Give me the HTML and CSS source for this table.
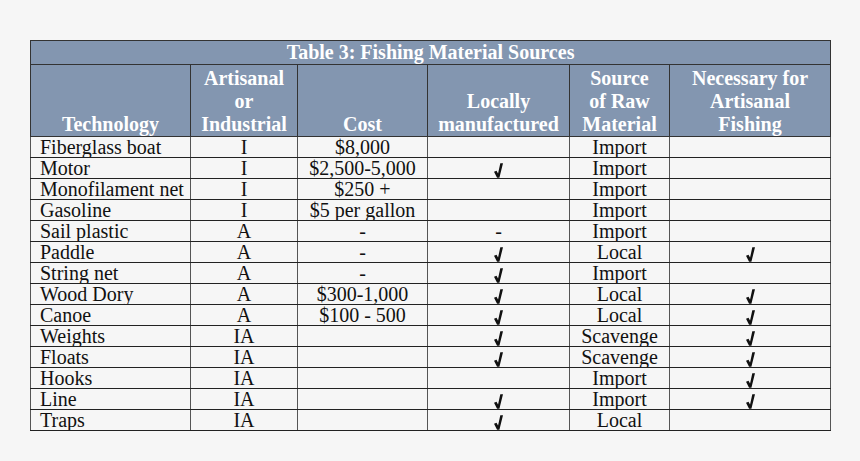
FILE: index.html
```html
<!DOCTYPE html>
<html>
<head>
<meta charset="utf-8">
<link rel="stylesheet" href="styles.css">
</head>
<body>
<table class="tbl">
  <colgroup>
    <col class="c1"><col class="c2"><col class="c3"><col class="c4"><col class="c5"><col class="c6">
  </colgroup>
  <thead>
    <tr class="title-row"><th colspan="6">Table 3: Fishing Material Sources</th></tr>
    <tr class="head-row">
      <th>Technology</th>
      <th>Artisanal<br>or<br>Industrial</th>
      <th>Cost</th>
      <th>Locally<br>manufactured</th>
      <th>Source<br>of Raw<br>Material</th>
      <th>Necessary for<br>Artisanal<br>Fishing</th>
    </tr>
  </thead>
  <tbody>
    <tr><td class="name">Fiberglass boat</td><td>I</td><td>$8,000</td><td></td><td>Import</td><td></td></tr>
    <tr><td class="name">Motor</td><td>I</td><td>$2,500-5,000</td><td><svg class="chk" viewBox="0 0 10 16"><path d="M0 9.4 L2.8 8.2 L4.5 11.4 L7 0 L10 0 L6 16 L3.4 16 Z"/></svg></td><td>Import</td><td></td></tr>
    <tr><td class="name">Monofilament net</td><td>I</td><td>$250 +</td><td></td><td>Import</td><td></td></tr>
    <tr><td class="name">Gasoline</td><td>I</td><td>$5 per gallon</td><td></td><td>Import</td><td></td></tr>
    <tr><td class="name">Sail plastic</td><td>A</td><td>-</td><td>-</td><td>Import</td><td></td></tr>
    <tr><td class="name">Paddle</td><td>A</td><td>-</td><td><svg class="chk" viewBox="0 0 10 16"><path d="M0 9.4 L2.8 8.2 L4.5 11.4 L7 0 L10 0 L6 16 L3.4 16 Z"/></svg></td><td>Local</td><td><svg class="chk" viewBox="0 0 10 16"><path d="M0 9.4 L2.8 8.2 L4.5 11.4 L7 0 L10 0 L6 16 L3.4 16 Z"/></svg></td></tr>
    <tr><td class="name">String net</td><td>A</td><td>-</td><td><svg class="chk" viewBox="0 0 10 16"><path d="M0 9.4 L2.8 8.2 L4.5 11.4 L7 0 L10 0 L6 16 L3.4 16 Z"/></svg></td><td>Import</td><td></td></tr>
    <tr><td class="name">Wood Dory</td><td>A</td><td>$300-1,000</td><td><svg class="chk" viewBox="0 0 10 16"><path d="M0 9.4 L2.8 8.2 L4.5 11.4 L7 0 L10 0 L6 16 L3.4 16 Z"/></svg></td><td>Local</td><td><svg class="chk" viewBox="0 0 10 16"><path d="M0 9.4 L2.8 8.2 L4.5 11.4 L7 0 L10 0 L6 16 L3.4 16 Z"/></svg></td></tr>
    <tr><td class="name">Canoe</td><td>A</td><td>$100 - 500</td><td><svg class="chk" viewBox="0 0 10 16"><path d="M0 9.4 L2.8 8.2 L4.5 11.4 L7 0 L10 0 L6 16 L3.4 16 Z"/></svg></td><td>Local</td><td><svg class="chk" viewBox="0 0 10 16"><path d="M0 9.4 L2.8 8.2 L4.5 11.4 L7 0 L10 0 L6 16 L3.4 16 Z"/></svg></td></tr>
    <tr><td class="name">Weights</td><td>IA</td><td></td><td><svg class="chk" viewBox="0 0 10 16"><path d="M0 9.4 L2.8 8.2 L4.5 11.4 L7 0 L10 0 L6 16 L3.4 16 Z"/></svg></td><td>Scavenge</td><td><svg class="chk" viewBox="0 0 10 16"><path d="M0 9.4 L2.8 8.2 L4.5 11.4 L7 0 L10 0 L6 16 L3.4 16 Z"/></svg></td></tr>
    <tr><td class="name">Floats</td><td>IA</td><td></td><td><svg class="chk" viewBox="0 0 10 16"><path d="M0 9.4 L2.8 8.2 L4.5 11.4 L7 0 L10 0 L6 16 L3.4 16 Z"/></svg></td><td>Scavenge</td><td><svg class="chk" viewBox="0 0 10 16"><path d="M0 9.4 L2.8 8.2 L4.5 11.4 L7 0 L10 0 L6 16 L3.4 16 Z"/></svg></td></tr>
    <tr><td class="name">Hooks</td><td>IA</td><td></td><td></td><td>Import</td><td><svg class="chk" viewBox="0 0 10 16"><path d="M0 9.4 L2.8 8.2 L4.5 11.4 L7 0 L10 0 L6 16 L3.4 16 Z"/></svg></td></tr>
    <tr><td class="name">Line</td><td>IA</td><td></td><td><svg class="chk" viewBox="0 0 10 16"><path d="M0 9.4 L2.8 8.2 L4.5 11.4 L7 0 L10 0 L6 16 L3.4 16 Z"/></svg></td><td>Import</td><td><svg class="chk" viewBox="0 0 10 16"><path d="M0 9.4 L2.8 8.2 L4.5 11.4 L7 0 L10 0 L6 16 L3.4 16 Z"/></svg></td></tr>
    <tr><td class="name">Traps</td><td>IA</td><td></td><td><svg class="chk" viewBox="0 0 10 16"><path d="M0 9.4 L2.8 8.2 L4.5 11.4 L7 0 L10 0 L6 16 L3.4 16 Z"/></svg></td><td>Local</td><td></td></tr>
  </tbody>
</table>
</body>
</html>
```
FILE: styles.css
```css
html, body {
  margin: 0;
  padding: 0;
  background: #f6f6f6;
}
body {
  padding: 40px 30px 0 30px;
  font-family: "Liberation Serif", "Times New Roman", serif;
  color: #111;
}
.tbl {
  border-collapse: collapse;
  table-layout: fixed;
  width: 800px;
  border: 1px solid #333;
}
.c1 { width: 160px; }
.c2 { width: 107px; }
.c3 { width: 130px; }
.c4 { width: 142px; }
.c5 { width: 100px; }
.c6 { width: 161px; }
th {
  background: #8396b0;
  color: #fff;
  font-weight: bold;
  font-size: 20px;
  text-align: center;
  vertical-align: bottom;
  padding: 0;
  border: 1px solid #333;
}
.title-row th {
  height: 23px;
  line-height: 23px;
}
.head-row th {
  height: 71px;
  line-height: 23px;
  padding-bottom: 0;
}
td {
  height: 20px;
  padding: 0;
  font-size: 20px;
  line-height: 20px;
  text-align: center;
  vertical-align: bottom;
  border-left: 1px solid #555;
  border-right: 1px solid #555;
  border-top: 1px solid #222;
  border-bottom: 1px solid #222;
  overflow: hidden;
  white-space: nowrap;
}
td.name {
  text-align: left;
  padding-left: 9px;
}
.chk {
  width: 9px;
  height: 15px;
  display: inline-block;
  vertical-align: -3px;
  fill: #111;
}
```
